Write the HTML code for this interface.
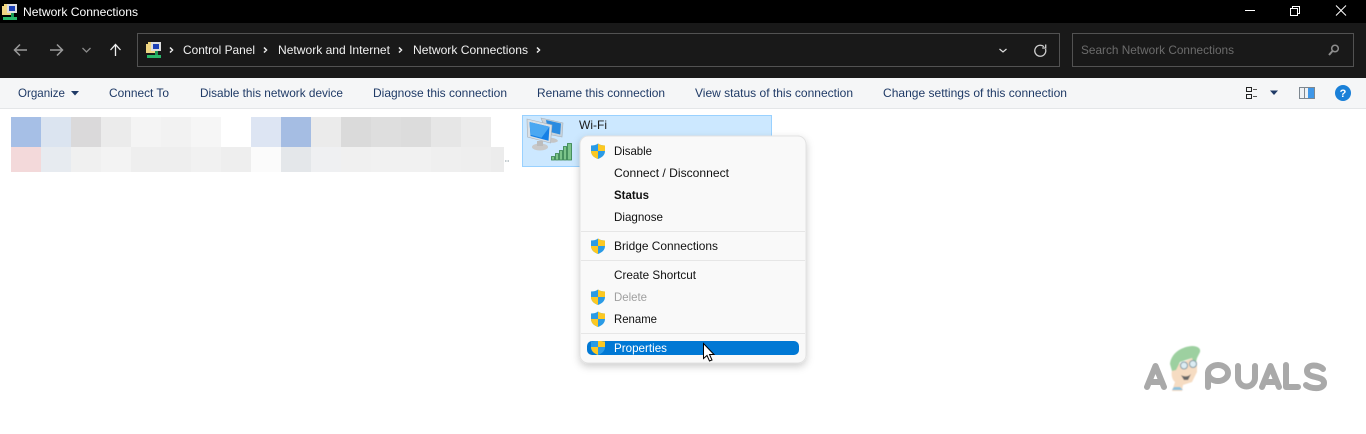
<!DOCTYPE html>
<html><head><meta charset="utf-8"><style>
html,body{margin:0;padding:0;background:#fff;width:1366px;height:434px;overflow:hidden}
svg{display:block;position:absolute;left:0;top:0}
text{font-family:"Liberation Sans",sans-serif;font-size:12px}
.t{fill:#1f3a66}
.m{fill:#111}
</style></head><body>
<svg width="1366" height="434" viewBox="0 0 1366 434" xmlns="http://www.w3.org/2000/svg">
<defs>
<filter id="sh" x="-10%" y="-10%" width="120%" height="120%"><feDropShadow dx="0" dy="3" stdDeviation="4" flood-color="#000" flood-opacity=".2"/></filter>
<filter id="b1"><feGaussianBlur stdDeviation=".5"/></filter>
<g id="shield"><path d="M0-7.500C2-6 4.500-5.500 7-5.500V0C7 4 4 6.500 0 8-4 6.500-7 4-7 0V-5.500C-4.500-5.500-2-6 0-7.500Z" fill="#2a9be6"/><path d="M0-7.500C2-6 4.500-5.500 7-5.500V0H0Z" fill="#fcc822"/><path d="M0 0H-7C-7 4-4 6.500 0 8Z" fill="#fcc822"/></g>
<g id="net"><rect x="3" y="1" width="9" height="7" fill="#f2d77a"/><rect x="1" y="3" width="9" height="9" fill="#efd583"/><rect x="6" y="1" width="10" height="9" fill="#ddd"/><rect x="8" y="3" width="6" height="5" fill="#1b3fb5"/><rect x="10" y="10" width="3" height="4" fill="#1a9a55"/><rect x="2" y="14" width="14" height="3" fill="#29b76a"/></g>
</defs>
<rect width="1366" height="24" fill="#000"/>
<rect y="23" width="1366" height="55" fill="#191919"/>
<rect y="78" width="1366" height="30" fill="#f5f6f7"/>
<rect y="108" width="1366" height="1" fill="#e4e6e8"/>
<use href="#net" x="1" y="3"/>
<text x="23" y="16" fill="#fff" textLength="115" lengthAdjust="spacingAndGlyphs">Network Connections</text>
<path d="M1245 10.500h10" stroke="#fff" stroke-width="1"/>
<path d="M1290.500 8.500h7v7h-7zM1292.500 8.500v-2h7v7h-2" fill="none" stroke="#fff"/>
<path d="M1336 5.500l10 10M1346 5.500l-10 10" stroke="#fff" stroke-width="1"/>
<path d="M15 50h12M20 44.500l-5.500 5.500 5.500 5.500" fill="none" stroke="#9a9a9a" stroke-width="1.500"/>
<path d="M50 50h12M57 44.500l5.500 5.500-5.500 5.500" fill="none" stroke="#9a9a9a" stroke-width="1.500"/>
<path d="M82.500 48l4 4 4-4" fill="none" stroke="#8a8a8a" stroke-width="1.300"/>
<path d="M115.500 56V45M110.500 50l5-5.500 5 5.500" fill="none" stroke="#f0f0f0" stroke-width="1.300"/>
<rect x="137.500" y="33.500" width="922" height="33" fill="#191919" stroke="#525252"/>
<use href="#net" x="145" y="41"/>
<path d="M170 47.500l2.500 2.500-2.500 2.500M264 47.500l2.500 2.500-2.500 2.500M399 47.500l2.500 2.500-2.500 2.500M537 47.500l2.500 2.500-2.500 2.500" fill="none" stroke="#eee" stroke-width="1.500"/>
<text x="183" y="54" fill="#f0f0f0" textLength="72" lengthAdjust="spacingAndGlyphs">Control Panel</text>
<text x="278" y="54" fill="#f0f0f0" textLength="112" lengthAdjust="spacingAndGlyphs">Network and Internet</text>
<text x="413" y="54" fill="#f0f0f0" textLength="115" lengthAdjust="spacingAndGlyphs">Network Connections</text>
<path d="M999.500 49l3.500 3 3.500-3" fill="none" stroke="#ddd" stroke-width="1.200"/>
<path d="M1045.500 49a5.500 5.500 0 1 1-1.500-2.300M1045.700 44.500v3.500h-3.500" fill="none" stroke="#cfcfcf" stroke-width="1.300"/>
<rect x="1072.500" y="33.500" width="281" height="33" fill="#191919" stroke="#525252"/>
<text x="1081" y="54" fill="#6c6c6c" textLength="153" lengthAdjust="spacingAndGlyphs">Search Network Connections</text>
<circle cx="1335" cy="48.500" r="3.300" fill="none" stroke="#8d8d8d" stroke-width="1.500"/><path d="M1332.500 51l-3.500 4" stroke="#8d8d8d" stroke-width="2"/>
<text class="t" x="18" y="97" textLength="47" lengthAdjust="spacingAndGlyphs">Organize</text>
<path d="M71 91h8l-4 4.500z" fill="#1f3a66"/>
<text class="t" x="109" y="97" textLength="60" lengthAdjust="spacingAndGlyphs">Connect To</text>
<text class="t" x="200" y="97" textLength="143" lengthAdjust="spacingAndGlyphs">Disable this network device</text>
<text class="t" x="373" y="97" textLength="134" lengthAdjust="spacingAndGlyphs">Diagnose this connection</text>
<text class="t" x="537" y="97" textLength="128" lengthAdjust="spacingAndGlyphs">Rename this connection</text>
<text class="t" x="695" y="97" textLength="158" lengthAdjust="spacingAndGlyphs">View status of this connection</text>
<text class="t" x="883" y="97" textLength="184" lengthAdjust="spacingAndGlyphs">Change settings of this connection</text>
<path d="M1246.500 87.500h5v4h-5zM1246.500 94.500h5v4h-5z" fill="none" stroke="#222"/><path d="M1253 89.500h4M1253 96.500h4" stroke="#555"/>
<path d="M1270 90.500h8l-4 4.500z" fill="#1f3a66"/>
<rect x="1299.500" y="87.500" width="15" height="11" fill="#eef1f4" stroke="#7d8790"/><rect x="1308" y="88" width="6" height="10" fill="#3f97e8"/><path d="M1304.500 88v10" stroke="#7d8790"/>
<circle cx="1343" cy="93" r="8" fill="#1a80d8"/><text x="1343" y="97" text-anchor="middle" style="font-size:11px;font-weight:bold" fill="#fff">?</text>
<g>
<rect x="11" y="117" width="30" height="30" fill="#a6bfe6"/><rect x="41" y="117" width="30" height="30" fill="#dbe4f0"/><rect x="71" y="117" width="30" height="30" fill="#dad9da"/><rect x="101" y="117" width="30" height="30" fill="#ebebeb"/><rect x="131" y="117" width="30" height="30" fill="#f4f4f4"/><rect x="161" y="117" width="30" height="30" fill="#f2f2f2"/><rect x="191" y="117" width="30" height="30" fill="#f6f6f6"/>
<rect x="251" y="117" width="30" height="30" fill="#dde5f3"/><rect x="281" y="117" width="30" height="30" fill="#a5bde3"/><rect x="311" y="117" width="30" height="30" fill="#ebebeb"/><rect x="341" y="117" width="30" height="30" fill="#dadada"/><rect x="371" y="117" width="30" height="30" fill="#dedede"/><rect x="401" y="117" width="30" height="30" fill="#dcdcdc"/><rect x="431" y="117" width="30" height="30" fill="#e6e6e6"/><rect x="461" y="117" width="30" height="30" fill="#ececec"/>
<rect x="11" y="147" width="30" height="25" fill="#f3d9da"/><rect x="41" y="147" width="30" height="25" fill="#e7ebf0"/><rect x="71" y="147" width="30" height="25" fill="#f0f0f0"/><rect x="101" y="147" width="30" height="25" fill="#f3f3f3"/><rect x="131" y="147" width="30" height="25" fill="#eeeeee"/><rect x="161" y="147" width="30" height="25" fill="#eeeeee"/><rect x="191" y="147" width="30" height="25" fill="#f1f1f1"/><rect x="221" y="147" width="30" height="25" fill="#eeeeee"/><rect x="251" y="147" width="30" height="25" fill="#fbfbfb"/><rect x="281" y="147" width="30" height="25" fill="#e4e7ea"/><rect x="311" y="147" width="30" height="25" fill="#eff0f2"/><rect x="341" y="147" width="30" height="25" fill="#f0f0f0"/><rect x="371" y="147" width="30" height="25" fill="#f1f1f1"/><rect x="401" y="147" width="30" height="25" fill="#f1f1f1"/><rect x="431" y="147" width="30" height="25" fill="#efefef"/><rect x="461" y="147" width="30" height="25" fill="#eeeeee"/><rect x="491" y="147" width="13" height="25" fill="#ececec"/>
</g>
<path d="M505 161h1.500M507.500 161h1.500" stroke="#8a9aa0"/>
<rect x="522.500" y="115.500" width="249" height="51" fill="#cce8ff" stroke="#99d1ff"/>
<g>
<path d="M541 118l22 5-1 14-15-3z" fill="#c8d3dc" stroke="#a8b0b8" stroke-width=".6"/><path d="M546 120l15 3.500-.8 11-12-3z" fill="#2b8be0"/>
<path d="M545 138c5-1 12 0 13 3-3 3-13 2-15-1z" fill="#c5c5c5"/>
<path d="M527 119l25 6-1.500 18-23-6z" fill="#d9e0e6" stroke="#a8b0b8" stroke-width=".6"/><path d="M529.500 122l20 4.800-1 14-18-4.800z" fill="#1580e6"/><path d="M529.500 122l20 4.800-8 11-11-3z" fill="#4aa8f2"/>
<ellipse cx="540" cy="147" rx="8" ry="3.500" fill="#c9c9c9"/><rect x="537" y="141" width="6" height="5" fill="#bcbcbc"/>
<path d="M551.500 156.500h3v3.500h-3zM555.500 153.500h3v6.500h-3zM559.500 150.500h3v9.500h-3zM563.500 146.500h3v13.500h-3zM567.500 143.500h4v16.500h-4z" fill="#7cc48a" stroke="#2f7f45" stroke-width=".8"/>
</g>
<text x="579" y="129" fill="#1a1a1a" textLength="28" lengthAdjust="spacingAndGlyphs">Wi-Fi</text>
<rect x="580" y="136" width="226" height="227" rx="8" fill="#f9f9f9" stroke="#e2e2e2" stroke-width="1" filter="url(#sh)"/>
<use href="#shield" x="598" y="151"/>
<text class="m" x="614" y="155" textLength="38" lengthAdjust="spacingAndGlyphs">Disable</text>
<text class="m" x="614" y="177" textLength="115" lengthAdjust="spacingAndGlyphs">Connect / Disconnect</text>
<text class="m" x="614" y="199" font-weight="bold" textLength="35" lengthAdjust="spacingAndGlyphs">Status</text>
<text class="m" x="614" y="221" textLength="49" lengthAdjust="spacingAndGlyphs">Diagnose</text>
<path d="M581 231.500h224M581 260.500h224M581 333.500h224" stroke="#e6e6e6"/>
<use href="#shield" x="598" y="246"/>
<text class="m" x="614" y="250" textLength="104" lengthAdjust="spacingAndGlyphs">Bridge Connections</text>
<text class="m" x="614" y="279" textLength="82" lengthAdjust="spacingAndGlyphs">Create Shortcut</text>
<use href="#shield" x="598" y="297"/>
<text x="614" y="301" fill="#a0a0a0" textLength="33" lengthAdjust="spacingAndGlyphs">Delete</text>
<use href="#shield" x="598" y="319"/>
<text class="m" x="614" y="323" textLength="43" lengthAdjust="spacingAndGlyphs">Rename</text>
<rect x="587" y="341" width="212" height="14" rx="5" fill="#0078d4"/>
<svg x="587" y="341" width="212" height="14"><use href="#shield" x="11" y="6"/></svg>
<text x="614" y="352" fill="#fff" textLength="53" lengthAdjust="spacingAndGlyphs">Properties</text>
<path d="M703.500 343.500v15l3.500-3 2.500 5.500 2.500-1-2.500-5.500h4.500z" fill="#fff" stroke="#000" stroke-width="1"/>
<g fill="none" stroke="#a9a9a9" stroke-width="6" stroke-linecap="round" stroke-linejoin="round">
<path d="M1147 387L1155.500 366L1164 387M1151 382h9"/>
<path d="M1208 387V373"/><ellipse cx="1218" cy="373" rx="10" ry="8"/>
<path d="M1238 366V378a8.500 8.500 0 0 0 17 0V366"/>
<path d="M1262 387L1270.500 366L1279 387M1266 382h9"/>
<path d="M1286 365V387H1298"/>
<path d="M1323 369C1320 365 1307 363 1307 371C1307 379 1324 375 1324 383C1324 390 1310 389 1306 385"/>
</g>
<g filter="url(#b1)">
<path d="M1175 366L1192 358L1197 362L1197 372L1192 382L1183 385L1182 391H1172L1175 382C1170 378 1171 368 1175 366Z" fill="#f6dcc2"/>
<path d="M1170 364C1171 354 1180 347 1192 346C1197 346 1201 348 1200 352L1197 358L1195 366L1192 358L1180 362L1176 370L1172 371Z" fill="#9dd0a0"/>
<circle cx="1184" cy="365.500" r="3.500" fill="#dcecf3" stroke="#7f9aa5"/><circle cx="1193" cy="364" r="3.500" fill="#dcecf3" stroke="#7f9aa5"/>
<path d="M1181 375c3 2 7 2 10-1l-3 6-4 0z" fill="#666"/>
<path d="M1172 390h11l-3-3-6 0z" fill="#8fc2dc"/>
</g>
</svg>
</body></html>
